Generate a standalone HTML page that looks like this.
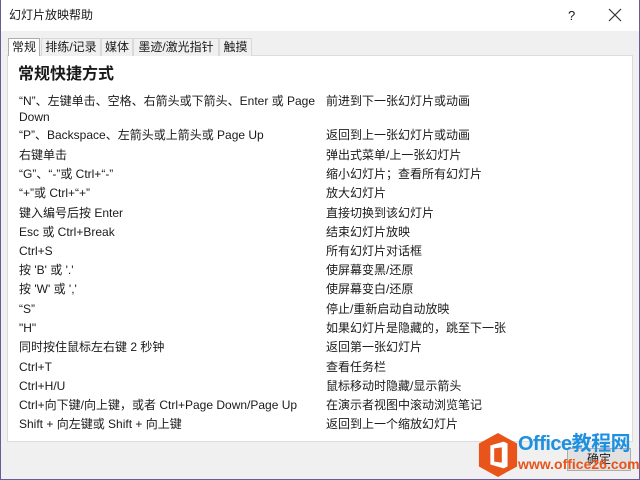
<!DOCTYPE html>
<html><head><meta charset="utf-8"><style>
*{margin:0;padding:0;box-sizing:border-box}
body{width:640px;height:480px;overflow:hidden;position:relative;background:#f0f0f0;font-family:"Liberation Sans","Noto Sans CJK SC",sans-serif;color:#1a1a1a}
.frame{position:absolute;inset:0;border:1px solid #6a5a9a;border-top:none}
.title{position:absolute;left:1px;right:1px;top:0;height:31px;background:#fff;font-size:12px;line-height:31px;padding-left:8px}
.q{position:absolute;left:568px;top:0;font-size:13px;line-height:31px}
.x{position:absolute;left:607px;top:7px;width:16px;height:16px}
.tab{position:absolute;top:38px;height:18px;font-size:12px;line-height:17px;text-align:center;background:#f0f0f0;border:1px solid #d9d9d9;border-bottom:none}
.tab.a{background:#fff;border:1px solid #adadad;border-bottom:none;top:38px;height:18px;z-index:2}
.panel{position:absolute;left:7px;top:55px;width:626px;height:387px;background:#fff;border:1px solid #dcdcdc}
h1{position:absolute;left:18px;top:64px;font-size:16px;font-weight:bold;line-height:22px}
.r{position:absolute;font-size:12px;line-height:16px;white-space:nowrap}
.l{left:19px}.c{left:326px}
.btn{position:absolute;left:567px;top:448px;width:64px;height:23px;border:1px solid #adadad;background:#e1e1e1;font-size:12px;text-align:center;line-height:21px}
.wm{position:absolute;white-space:nowrap;font-weight:bold}
</style></head><body>
<div class="title">幻灯片放映帮助</div>
<div class="q">?</div>
<svg class="x" viewBox="0 0 16 16"><path d="M2 2L14 14M14 2L2 14" stroke="#333" stroke-width="1.2"/></svg>
<div class="panel"></div>
<div class="tab a" style="left:8px;width:32px">常规</div>
<div class="tab" style="left:41px;width:60px">排练/记录</div>
<div class="tab" style="left:101px;width:32px">媒体</div>
<div class="tab" style="left:133px;width:86px">墨迹/激光指针</div>
<div class="tab" style="left:219px;width:33px">触摸</div>
<h1>常规快捷方式</h1>
<div class="r l" style="top:93px">“N”、左键单击、空格、右箭头或下箭头、Enter 或 Page</div>
<div class="r l" style="top:109px">Down</div>
<div class="r c" style="top:93px">前进到下一张幻灯片或动画</div>
<div class="r l" style="top:127px">“P”、Backspace、左箭头或上箭头或 Page Up</div><div class="r c" style="top:127px">返回到上一张幻灯片或动画</div>
<div class="r l" style="top:147px">右键单击</div><div class="r c" style="top:147px">弹出式菜单/上一张幻灯片</div>
<div class="r l" style="top:166px">“G”、“-”或 Ctrl+“-”</div><div class="r c" style="top:166px">缩小幻灯片；查看所有幻灯片</div>
<div class="r l" style="top:185px">“+”或 Ctrl+“+”</div><div class="r c" style="top:185px">放大幻灯片</div>
<div class="r l" style="top:205px">键入编号后按 Enter</div><div class="r c" style="top:205px">直接切换到该幻灯片</div>
<div class="r l" style="top:224px">Esc 或 Ctrl+Break</div><div class="r c" style="top:224px">结束幻灯片放映</div>
<div class="r l" style="top:243px">Ctrl+S</div><div class="r c" style="top:243px">所有幻灯片对话框</div>
<div class="r l" style="top:262px">按 'B' 或 '.'</div><div class="r c" style="top:262px">使屏幕变黑/还原</div>
<div class="r l" style="top:281px">按 'W' 或 ','</div><div class="r c" style="top:281px">使屏幕变白/还原</div>
<div class="r l" style="top:301px">“S”</div><div class="r c" style="top:301px">停止/重新启动自动放映</div>
<div class="r l" style="top:320px">"H"</div><div class="r c" style="top:320px">如果幻灯片是隐藏的，跳至下一张</div>
<div class="r l" style="top:339px">同时按住鼠标左右键 2 秒钟</div><div class="r c" style="top:339px">返回第一张幻灯片</div>
<div class="r l" style="top:359px">Ctrl+T</div><div class="r c" style="top:359px">查看任务栏</div>
<div class="r l" style="top:378px">Ctrl+H/U</div><div class="r c" style="top:378px">鼠标移动时隐藏/显示箭头</div>
<div class="r l" style="top:397px">Ctrl+向下键/向上键，或者 Ctrl+Page Down/Page Up</div><div class="r c" style="top:397px">在演示者视图中滚动浏览笔记</div>
<div class="r l" style="top:416px">Shift + 向左键或 Shift + 向上键</div><div class="r c" style="top:416px">返回到上一个缩放幻灯片</div>
<div class="btn">确定</div>
<svg style="position:absolute;left:477px;top:431px" width="42" height="48" viewBox="0 0 44 50"><polygon points="22,2 42,13 42,37 22,48 2,37 2,13" fill="#e8541a"/><path d="M14 15 L28 11 L32 13 L32 37 L28 39 L14 35 Z M18 18 L18 32 L26 33 L26 17 Z" fill="#fff" fill-rule="evenodd"/></svg>
<div class="wm" style="left:518px;top:432px;font-size:20px;color:#1e90e0;line-height:24px;letter-spacing:-0.5px">Office教程网</div>
<div class="wm" style="left:518px;top:456px;font-size:14px;color:#e8541a;line-height:16px">www.office26.com</div>
<div class="frame"></div>
</body></html>
